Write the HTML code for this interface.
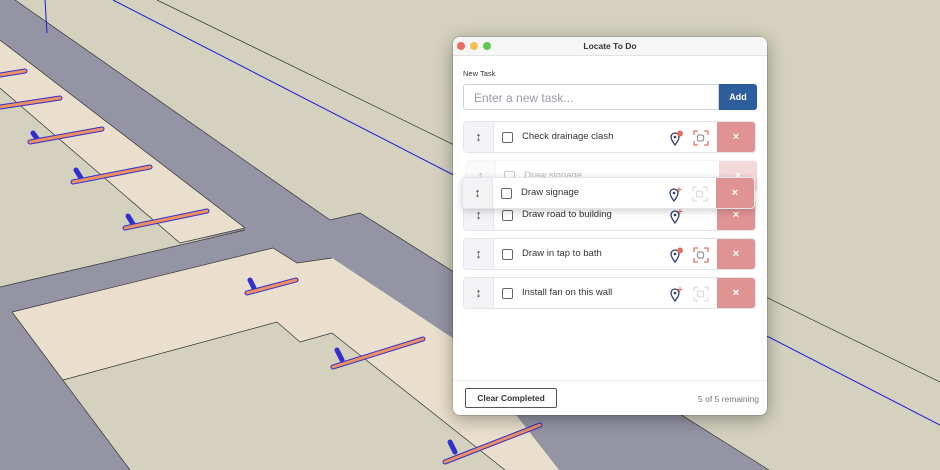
<!DOCTYPE html>
<html><head><style>
*{margin:0;padding:0;box-sizing:border-box}
body{width:940px;height:470px;overflow:hidden;position:relative;background:#d4d1be;font-family:"Liberation Sans",sans-serif}
#bg{position:absolute;left:0;top:0}
.dlg{position:absolute;left:453px;top:37px;width:314px;height:378px;background:#fff;border-radius:7px;box-shadow:0 4px 18px rgba(0,0,0,.35),0 0 0 1px rgba(0,0,0,.12);overflow:hidden}
.tb{height:19px;background:#f6f6f6;border-bottom:1px solid #e2e2e2;text-align:center;font-size:8.5px;font-weight:bold;line-height:19px;color:#333}
.dot{position:absolute;top:5px;width:8px;height:8px;border-radius:50%}
.lbl{position:absolute;left:10px;top:32px;font-size:7.5px;color:#333}
.inp{position:absolute;left:10px;top:47px;width:256px;height:26px;border:1px solid #cfd2d8;border-radius:3px 0 0 3px;font-size:12px;color:#9a9ca6;padding:6px 0 0 10px}
.add{position:absolute;left:266px;top:47px;width:38px;height:26px;background:#2c5d9c;color:#fff;font-size:9px;font-weight:bold;text-align:center;line-height:26px;border-radius:0 3px 3px 0}
.row{position:absolute;left:10px;width:293px;height:32px;border:1px solid #e4e5ea;border-radius:4px;background:#fff;overflow:hidden}
.h{position:absolute;left:0;top:0;width:30px;height:100%;background:#f3f3f5;border-right:1px solid #e4e5ea;color:#555;font-size:13px;text-align:center;line-height:30px}
.cb{position:absolute;left:38px;top:10px;width:11px;height:11px;border:1px solid #666;border-radius:2px}
.t{position:absolute;left:58px;top:9px;font-size:9.5px;color:#333}
.x{position:absolute;right:0;top:0;width:38px;height:100%;background:#e09393;color:#fff;font-size:11px;font-weight:bold;text-align:center;line-height:30px}
.i1{position:absolute;left:206px;top:8px}
.i2{position:absolute;left:229px;top:8px}
.foot{position:absolute;left:0;top:343px;width:100%;border-top:1px solid #eee}
.btn{position:absolute;left:12px;top:351px;width:92px;height:20px;border:1px solid #555;border-radius:2px;font-size:8.5px;font-weight:bold;text-align:center;line-height:18px;color:#333}
.rem{position:absolute;right:8px;top:357px;font-size:8.5px;color:#777}
</style></head><body>
<svg id="bg" width="940" height="470">
<polygon points="0,0 15,0 330,220 360,213 769,470 559,470 460,343 332,258 297,263 273,248 12,312 130,470 0,470" fill="#9494a4"/>
<polygon points="0,88 180,243 245,230 0,287" fill="#d4d1be"/>
<polygon points="63,380 277,322 300,342 332,333 505,470 130,470" fill="#d4d1be"/>
<polygon points="0,40 245,228 180,243 0,88" fill="#eadfcc"/>
<polygon points="12,312 273,248 297,263 332,258 460,343 559,470 505,470 332,333 300,342 277,322 63,380" fill="#eadfcc"/>
<g stroke="#333" stroke-width=".7" fill="none">
<polyline points="15,0 330,220 360,213 769,470"/><polyline points="0,40 245,228 180,243 0,88"/>
<polyline points="245,230 0,287"/>
<polyline points="12,312 273,248 297,263 332,258"/><polyline points="12,312 130,470"/>
<polyline points="63,380 277,322 300,342 332,333 505,470"/>
<line x1="157" y1="0" x2="940" y2="382"/>
</g>
<line x1="113" y1="0" x2="940" y2="425" stroke="#1a1ae0" stroke-width="1"/>
<line x1="45" y1="0" x2="47" y2="33" stroke="#1a1ae0" stroke-width="1"/>
<g stroke-linecap="round">
<g stroke="#3030d0" stroke-width="5"><line x1="0" y1="75" x2="25" y2="71"/><line x1="0" y1="107" x2="60" y2="98"/><line x1="30" y1="142" x2="102" y2="129"/><line x1="73" y1="182" x2="150" y2="167"/><line x1="125" y1="228" x2="207" y2="211"/><line x1="247" y1="293" x2="296" y2="280"/><line x1="333" y1="367" x2="423" y2="339"/><line x1="445" y1="462" x2="540" y2="425"/>
<line x1="33" y1="133" x2="38" y2="140"/><line x1="76" y1="170" x2="81" y2="178"/><line x1="128" y1="216" x2="133" y2="224"/><line x1="250" y1="280" x2="254" y2="288"/><line x1="337" y1="350" x2="342" y2="360"/><line x1="450" y1="442" x2="455" y2="452"/></g>
<g stroke="#f0905e" stroke-width="3"><line x1="0" y1="75" x2="25" y2="71"/><line x1="0" y1="107" x2="60" y2="98"/><line x1="30" y1="142" x2="102" y2="129"/><line x1="73" y1="182" x2="150" y2="167"/><line x1="125" y1="228" x2="207" y2="211"/><line x1="247" y1="293" x2="296" y2="280"/><line x1="333" y1="367" x2="423" y2="339"/><line x1="445" y1="462" x2="540" y2="425"/></g>
</g>
</svg>
<div class="dlg">
<div class="tb">Locate To Do</div>
<div class="dot" style="left:4px;background:#ec6a5e"></div><div class="dot" style="left:17px;background:#f4bf4f"></div><div class="dot" style="left:30px;background:#61c554"></div>
<div class="lbl">New Task</div>
<div class="inp">Enter a new task...</div><div class="add">Add</div>

<div class="row" style="top:84px"><div class="h">↕</div><div class="cb"></div><div class="t">Check drainage clash</div>
<svg class="i1" width="14" height="16"><path d="M5 15C2 11 1 9 1 7a4 4 0 0 1 8 0c0 2-1 4-4 8z" fill="none" stroke="#2c3e70" stroke-width="1.3"/><circle cx="5" cy="7" r="1.3" fill="#2c3e70"/><circle cx="10" cy="3.5" r="3" fill="#e07060"/></svg>
<svg class="i2" width="16" height="16" fill="none" stroke="#e07060" stroke-width="1.3"><path d="M1 5V1h4M11 1h4v4M15 11v4h-4M5 15H1v-4"/><rect x="4.5" y="5" width="6" height="6" rx="1.5" stroke="#999"/></svg>
<div class="x">×</div></div>

<div class="row" style="top:123px;left:12px;opacity:.35"><div class="h">↕</div><div class="cb"></div><div class="t">Draw signage</div><div class="x">×</div></div>

<div class="row" style="top:162px"><div class="h">↕</div><div class="cb"></div><div class="t">Draw road to building</div>
<svg class="i1" width="14" height="16"><path d="M5 15C2 11 1 9 1 7a4 4 0 0 1 8 0c0 2-1 4-4 8z" fill="none" stroke="#2c3e70" stroke-width="1.3"/><circle cx="5" cy="7" r="1.3" fill="#2c3e70"/><path d="M10 1v5M7.5 3.5h5" stroke="#e07060"/></svg>
<div class="x">×</div></div>

<div class="row" style="top:140px;left:9px;box-shadow:0 2px 8px rgba(0,0,0,.2)"><div class="h">↕</div><div class="cb"></div><div class="t">Draw signage</div>
<svg class="i1" width="14" height="16"><path d="M5 15C2 11 1 9 1 7a4 4 0 0 1 8 0c0 2-1 4-4 8z" fill="none" stroke="#2c3e70" stroke-width="1.3"/><circle cx="5" cy="7" r="1.3" fill="#2c3e70"/><path d="M10 1v5M7.5 3.5h5" stroke="#e07060"/></svg>
<svg class="i2" width="16" height="16" fill="none" stroke="#ddd" stroke-width="1.3"><path d="M1 5V1h4M11 1h4v4M15 11v4h-4M5 15H1v-4"/><rect x="4.5" y="5" width="6" height="6" rx="1.5"/></svg>
<div class="x">×</div></div>

<div class="row" style="top:201px"><div class="h">↕</div><div class="cb"></div><div class="t">Draw in tap to bath</div>
<svg class="i1" width="14" height="16"><path d="M5 15C2 11 1 9 1 7a4 4 0 0 1 8 0c0 2-1 4-4 8z" fill="none" stroke="#2c3e70" stroke-width="1.3"/><circle cx="5" cy="7" r="1.3" fill="#2c3e70"/><circle cx="10" cy="3.5" r="3" fill="#e07060"/></svg>
<svg class="i2" width="16" height="16" fill="none" stroke="#e07060" stroke-width="1.3"><path d="M1 5V1h4M11 1h4v4M15 11v4h-4M5 15H1v-4"/><rect x="4.5" y="5" width="6" height="6" rx="1.5" stroke="#999"/></svg>
<div class="x">×</div></div>

<div class="row" style="top:240px"><div class="h">↕</div><div class="cb"></div><div class="t">Install fan on this wall</div>
<svg class="i1" width="14" height="16"><path d="M5 15C2 11 1 9 1 7a4 4 0 0 1 8 0c0 2-1 4-4 8z" fill="none" stroke="#2c3e70" stroke-width="1.3"/><circle cx="5" cy="7" r="1.3" fill="#2c3e70"/><path d="M10 1v5M7.5 3.5h5" stroke="#e07060"/></svg>
<svg class="i2" width="16" height="16" fill="none" stroke="#ddd" stroke-width="1.3"><path d="M1 5V1h4M11 1h4v4M15 11v4h-4M5 15H1v-4"/><rect x="4.5" y="5" width="6" height="6" rx="1.5"/></svg>
<div class="x">×</div></div>

<div class="foot"></div>
<div class="btn">Clear Completed</div>
<div class="rem">5 of 5 remaining</div>
</div>
</body></html>
